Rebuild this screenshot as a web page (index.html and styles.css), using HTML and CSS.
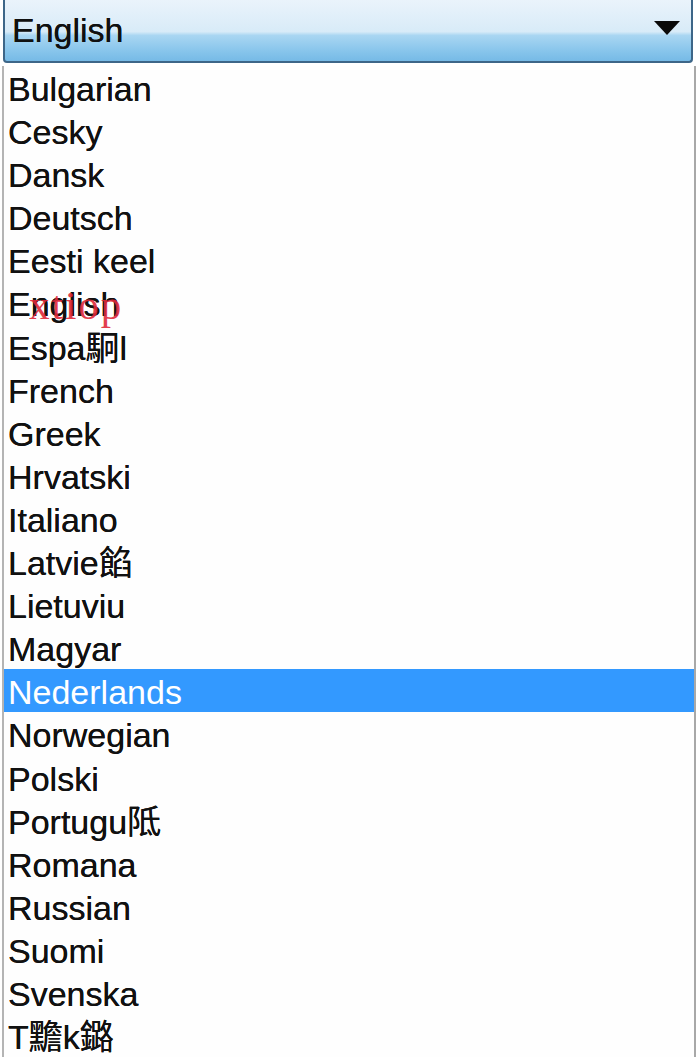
FILE: index.html
```html
<!DOCTYPE html>
<html lang="en">
<head>
    <meta charset="UTF-8">
    <meta name="viewport" content="width=device-width, initial-scale=1.0">
    <title>Language</title>

    <link rel="stylesheet" href="styles.css">
</head>
<body>
    <div class="dropdown">
        <div class="select">
            <span class="select-value">English</span>
            <svg class="select-arrow" width="26" height="14" viewBox="0 0 26 14">
                <polygon points="0,0 26,0 13,14" fill="#0a0a0a"/>
            </svg>
        </div>

        <ul class="options">
            <li>Bulgarian</li>
            <li>Cesky</li>
            <li>Dansk</li>
            <li>Deutsch</li>
            <li>Eesti keel</li>
            <li>English</li>
            <li>Espa駉l</li>
            <li>French</li>
            <li>Greek</li>
            <li>Hrvatski</li>
            <li>Italiano</li>
            <li>Latvie餡</li>
            <li>Lietuviu</li>
            <li>Magyar</li>
            <li class="selected">Nederlands</li>
            <li>Norwegian</li>
            <li>Polski</li>
            <li>Portugu阺</li>
            <li>Romana</li>
            <li>Russian</li>
            <li>Suomi</li>
            <li>Svenska</li>
            <li>T黵k鏴</li>
        </ul>

        <!-- watermark sits over the list, like in the screenshot -->
        <span class="watermark">xtiop</span>
    </div>
</body>
</html>
```

FILE: styles.css
```css
* {
    margin: 0;
    padding: 0;
    box-sizing: border-box;
}

body {
    font-family: "Liberation Sans", "Noto Sans CJK SC", sans-serif;
    background: #fff;
    overflow: hidden;
}

.dropdown {
    position: relative;
    width: 700px;
    height: 1058px;
}

.select {
    display: flex;
    align-items: center;
    justify-content: space-between;
    height: 63px;
    margin: 0 7px 0 3px;
    padding: 0 11px 2px 7px;
    border: 2px solid #3d6688;
    border-top: none;
    border-radius: 0 0 4px 4px;
    background: linear-gradient(to bottom, #eaf3fb 0%, #d8ebf8 52%, #a9d6f2 58%, #86c4eb 85%, #76bae6 100%);
    color: #101010;
    font-size: 34px;
}

.select-value {
    line-height: 1;
    text-shadow: 0 0 0.6px #101010;
}

.select-arrow {
    display: block;
    margin-bottom: 4px;
}

.options {
    list-style: none;
    margin: 3px 4px 0 2px;
    border-left: 2px solid #b4b4b4;
    border-right: 2px solid #a8a8a8;
    background: #fefefe;
}

.options li {
    height: 43.1px;
    padding: 2px 0 0 4px;
    font-size: 34px;
    line-height: 43px;
    color: #111;
    white-space: nowrap;
    text-shadow: 0 0 0.6px #111;
}

.options li.selected {
    background: #3399ff;
    color: #fff;
    text-shadow: none;
}

.watermark {
    position: absolute;
    left: 29px;
    top: 281px;
    font-family: "Liberation Serif", serif;
    font-size: 41px;
    color: #e02a3a;
    letter-spacing: 2px;
    opacity: 0.9;
}
```
